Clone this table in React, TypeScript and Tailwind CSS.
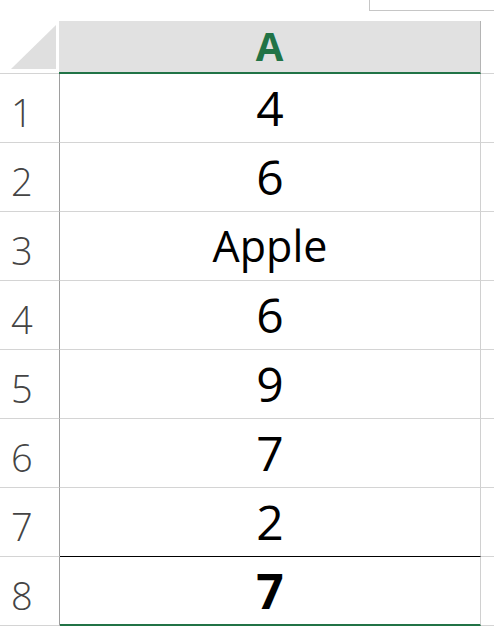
import React from 'react';

type Row = { n: number; value: string; kind: 'num' | 'text' | 'bold' };

const rows: Row[] = [
  { n: 1, value: '4', kind: 'num' },
  { n: 2, value: '6', kind: 'num' },
  { n: 3, value: 'Apple', kind: 'text' },
  { n: 4, value: '6', kind: 'num' },
  { n: 5, value: '9', kind: 'num' },
  { n: 6, value: '7', kind: 'num' },
  { n: 7, value: '2', kind: 'num' },
  { n: 8, value: '7', kind: 'bold' },
];

const font = { fontFamily: '"Open Sans", "Noto Sans", sans-serif' };

export default function App() {
  return (
    <div className="w-[494px] h-[628px] overflow-hidden bg-white" style={font}>
      {/* top edge of the name box */}
      <div className="h-[21px] flex justify-end items-start">
        <div className="w-[125px] h-[11px] border-l border-b border-[#c6c6c6]" />
      </div>

      {/* column header row */}
      <div className="flex h-[53px]">
        <div className="w-[59px] shrink-0 border-b border-[#d4d4d4] bg-white">
          <svg width="59" height="52" viewBox="0 0 59 52">
            <polygon points="11,48 56,48 56,4" fill="#dfdfdf" />
          </svg>
        </div>
        <div className="w-[422px] shrink-0 bg-[#e1e1e1] border-r border-[#b4b4b4] border-b-2 border-b-[#217346] flex items-center justify-center">
          <span className="text-[40px] leading-none font-bold text-[#217346] pb-[2px]">A</span>
        </div>
        <div className="flex-1 border-b border-[#d4d4d4]" />
      </div>

      {rows.map((r) => {
        const cellBorder =
          r.n === 7
            ? 'border-b border-b-black'
            : r.n === 8
            ? 'border-b-2 border-b-[#217346]'
            : 'border-b border-b-[#d4d4d4]';
        const textCls =
          r.kind === 'text'
            ? 'text-[43px] font-normal'
            : r.kind === 'bold'
            ? 'text-[48px] font-bold'
            : 'text-[48px] font-medium';
        return (
          <div key={r.n} className="flex h-[69px]">
            <div className="w-[60px] shrink-0 border-r border-[#9e9e9e] border-b border-b-[#d4d4d4] flex items-center pl-[11px] pt-[8px]">
              <span className="text-[38px] font-light text-[#444444] leading-none">{r.n}</span>
            </div>
            <div className={`w-[421px] shrink-0 border-r border-r-[#d0d0d0] ${cellBorder} flex items-center justify-center`}>
              <span className={`${textCls} text-black`}>{r.value}</span>
            </div>
            <div className="flex-1 border-b border-[#d4d4d4]" />
          </div>
        );
      })}
    </div>
  );
}
